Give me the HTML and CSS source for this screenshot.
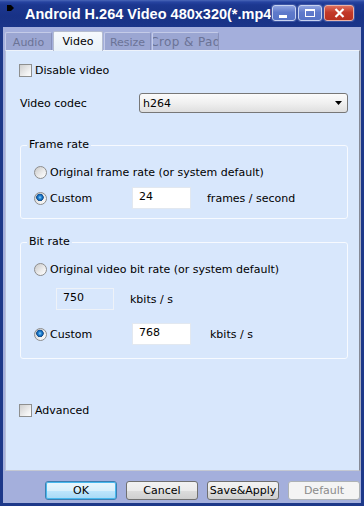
FILE: index.html
```html
<!DOCTYPE html>
<html lang="en">
<head>
  <meta charset="UTF-8" />
  <title>Android H.264 Video 480x320(*.mp4)</title>
  <link rel="stylesheet" href="styles.css">
</head>
<body>
  <div class="window">
    <div class="titlebar">
      <svg class="app-icon" width="7" height="6" viewBox="0 0 7 6"><polygon points="0,0 4,0 7,3 4,6 0,6" fill="#000"/></svg>
      <span class="title">Android H.264 Video 480x320(*.mp4)</span>
      <div class="caption-buttons">
        <span class="cap-btn cap-min"><span class="min-bar"></span></span>
        <span class="cap-btn cap-max"><span class="max-box"></span></span>
        <span class="cap-btn cap-close">
          <svg width="11" height="10" viewBox="0 0 11 10"><path d="M1.5 1 L9.5 9 M9.5 1 L1.5 9" stroke="#fff" stroke-width="2.2" fill="none"/></svg>
        </span>
      </div>
    </div>

    <div class="client">
      <div class="tabs">
        <div class="tab tab-audio">Audio</div>
        <div class="tab tab-video active">Video</div>
        <div class="tab tab-resize">Resize</div>
        <div class="tab tab-crop">Crop &amp; Pad</div>
      </div>

      <div class="panel">
        <label class="check-row">
          <span class="checkbox"></span>
          <span>Disable video</span>
        </label>

        <div class="codec-row">
          <span class="codec-label">Video codec</span>
          <div class="select">
            <span>h264</span>
            <svg width="7" height="4" viewBox="0 0 7 4"><polygon points="0,0 7,0 3.5,4" fill="#000"/></svg>
          </div>
        </div>

        <div class="group group-frame">
          <div class="group-title">Frame rate</div>
          <div class="opt opt-first">
            <span class="radio"></span>
            <span>Original frame rate (or system default)</span>
          </div>
          <div class="opt-row opt-custom">
            <div class="opt opt-label">
              <span class="radio checked"></span>
              <span>Custom</span>
            </div>
            <div class="num">24</div>
            <span class="unit unit-fps">frames / second</span>
          </div>
        </div>

        <div class="group group-bit">
          <div class="group-title">Bit rate</div>
          <div class="opt opt-first">
            <span class="radio"></span>
            <span>Original video bit rate (or system default)</span>
          </div>
          <div class="opt-row opt-orig-value">
            <div class="num disabled">750</div>
            <span class="unit">kbits / s</span>
          </div>
          <div class="opt-row opt-custom-bit">
            <div class="opt opt-label">
              <span class="radio checked"></span>
              <span>Custom</span>
            </div>
            <div class="num">768</div>
            <span class="unit unit-kbit">kbits / s</span>
          </div>
        </div>

        <label class="check-row advanced">
          <span class="checkbox"></span>
          <span>Advanced</span>
        </label>
      </div>

      <div class="buttons">
        <button class="btn btn-default-focus">OK</button>
        <button class="btn">Cancel</button>
        <button class="btn">Save&amp;Apply</button>
        <button class="btn" disabled>Default</button>
      </div>
    </div>
  </div>
</body>
</html>
```

FILE: styles.css
```css
:root {
  --frame: #1d3889;
  --strip: #a4afdc;
  --panel: #d8e7fc;
  --text: #000;
}
* {
  box-sizing: border-box;
}
body {
  margin: 0;
  background: var(--frame);
  font-family: "DejaVu Sans", Verdana, sans-serif;
  font-size: 11px;
  color: var(--text);
}
.window {
  width: 364px;
  height: 506px;
  display: flex;
  flex-direction: column;
  background: var(--frame);
  overflow: hidden;
}

/* Title bar */
.titlebar {
  height: 27px;
  flex: none;
  display: flex;
  align-items: flex-start;
  padding-left: 7px;
  padding-right: 10px;
  background: linear-gradient(#4a66b8 0, #2643a0 2px, #1c3790 5px, #183286 60%, #1b3589 100%);
}
.app-icon {
  margin-top: 5px;
  margin-right: 11px;
  flex: none;
}
.title {
  flex: 1;
  min-width: 0;
  overflow: hidden;
  white-space: nowrap;
  color: #fff;
  font-family: "Liberation Sans", Arial, sans-serif;
  font-weight: bold;
  font-size: 14.5px;
  line-height: 25px;
  padding-top: 2px;
}
.caption-buttons {
  display: flex;
  gap: 2px;
  margin-top: 5px;
  margin-left: 1px;
  flex: none;
}
.cap-btn {
  width: 24px;
  height: 16px;
  border-radius: 3px;
  border: 1px solid #c7d2f0;
  box-shadow: 0 0 0 1px #3b54a4;
  background: linear-gradient(#8ea3e0, #5f7acb 45%, #5673c6 100%);
  display: flex;
  align-items: center;
  justify-content: center;
}
.cap-close {
  width: 30px;
  border-color: #eab1a6;
  background: linear-gradient(#dd6e5c, #c3392a 45%, #b8301f 100%);
}
.min-bar {
  width: 8px;
  height: 3px;
  background: #fff;
  margin-top: 7px;
  margin-left: -2px;
}
.max-box {
  width: 10px;
  height: 8px;
  border: 1px solid #fff;
  border-top-width: 2px;
}

/* Client area */
.client {
  flex: 1;
  margin: 0 3px 3px;
  background: var(--strip);
  display: flex;
  flex-direction: column;
}
.tabs {
  display: flex;
  align-items: flex-end;
  gap: 1px;
  height: 19px;
  margin: 4px 0 0 2px;
  position: relative;
  z-index: 1;
  flex: none;
}
.tab {
  height: 18px;
  overflow: hidden;
  white-space: nowrap;
  display: flex;
  justify-content: center;
  align-items: center;
  color: #6b7396;
  background: #9ba6d2;
  border: 1px solid #c4cbe8;
  border-bottom: none;
  border-right-color: #8790bb;
  border-radius: 2px 2px 0 0;
  padding-top: 1px;
}
.tab-audio { width: 47px; }
.tab-video { width: 50px; }
.tab-resize { width: 47px; }
.tab-crop {
  width: 67px;
  font-size: 12px;
  letter-spacing: 0.4px;
}
.tab.active {
  height: 20px;
  margin-bottom: -1px;
  color: #000;
  background: linear-gradient(#f6f9fd, #e9f1f9);
  border-color: #b4bccf;
  padding-top: 0;
}

.panel {
  flex: 1;
  margin: 0 1px 0 2px;
  background: var(--panel);
  border: 1px solid #b8c0d8;
  border-top-color: #eef3fb;
  border-right-color: #858a96;
  border-bottom-color: #c4c8d2;
  box-shadow: 1px 0 0 #a9aec0;
  padding: 12px 11px 0 14px;
}

.check-row {
  display: flex;
  align-items: center;
  gap: 3px;
  height: 14px;
}
.checkbox {
  width: 13px;
  height: 13px;
  margin-left: -1px;
  border: 1px solid #8e8f8f;
  background: linear-gradient(135deg, #cfcfcf, #f2f2f2 70%, #fdfdfd);
}
.advanced {
  margin-top: 44px;
}

.codec-row {
  display: flex;
  align-items: center;
  height: 20px;
  margin-top: 16px;
}
.codec-label {
  width: 119px;
}
.select {
  width: 209px;
  height: 20px;
  border: 1px solid #777;
  border-radius: 3px;
  background: linear-gradient(#fbfbfb, #f0f0f0 50%, #dfdfdf);
  display: flex;
  align-items: center;
  justify-content: space-between;
  padding: 0 5px 0 3px;
}

/* Group boxes */
.group {
  width: 328px;
  margin-top: 32px;
  border: 1px solid #f7faff;
  border-radius: 3px;
  padding: 0 0 9px 13px;
}
.group-bit {
  margin-top: 23px;
  padding-bottom: 13px;
}
.group-title {
  width: fit-content;
  margin: -8px 0 0 -7px;
  padding: 0 2px;
  line-height: 14px;
  background: var(--panel);
}
.opt {
  display: flex;
  align-items: center;
  gap: 3px;
  height: 14px;
}
.opt-first {
  margin-top: 13px;
}
.opt-row {
  display: flex;
  align-items: center;
  height: 22px;
}
.opt-custom {
  margin-top: 8px;
}
.opt-orig-value {
  margin-top: 12px;
  padding-left: 22px;
}
.opt-custom-bit {
  margin-top: 13px;
}
.opt-label {
  width: 98px;
}
.radio {
  width: 13px;
  height: 13px;
  border-radius: 50%;
  border: 1px solid #8d8d8d;
  background: linear-gradient(135deg, #c9c9c9, #ededed 60%, #fefefe);
}
.radio.checked {
  background:
    radial-gradient(circle at 45% 40%, #8fd3fb 0, #2a8ad8 1.5px, #0c5aa8 3px, #1e4f86 3.5px, transparent 4px),
    linear-gradient(135deg, #c9c9c9, #ededed 60%, #fefefe);
}
.num {
  width: 59px;
  height: 22px;
  border: 1px solid #e2e8f0;
  background: #fff;
  padding: 0 0 2px 6px;
  line-height: 18px;
}
.num.disabled {
  width: 58px;
  background: var(--panel);
  border-color: #eef2f8;
}
.unit {
  margin-left: 16px;
}
.unit-kbit {
  margin-left: 19px;
}

/* Dialog buttons */
.buttons {
  height: 32px;
  flex: none;
  display: flex;
  gap: 9px;
  padding: 10px 0 0 42px;
}
.btn {
  width: 72px;
  height: 19px;
  padding: 0;
  font-family: "DejaVu Sans", Verdana, sans-serif;
  font-size: 11px;
  color: #000;
  border: 1px solid #707070;
  border-radius: 3px;
  background: linear-gradient(#f2f2f2, #ebebeb 50%, #dddddd 51%, #cfcfcf);
  flex: none;
}
.btn-default-focus {
  border-color: #3c7fb1;
  box-shadow: inset 0 0 0 1px #48b8ee;
  background: linear-gradient(#eaf6fd, #d9f0fc 50%, #bee6fd 51%, #a7d9f5);
}
.btn:disabled {
  color: #8b8b8b;
  border-color: #adb2b5;
  background: #f4f4f4;
}
```
